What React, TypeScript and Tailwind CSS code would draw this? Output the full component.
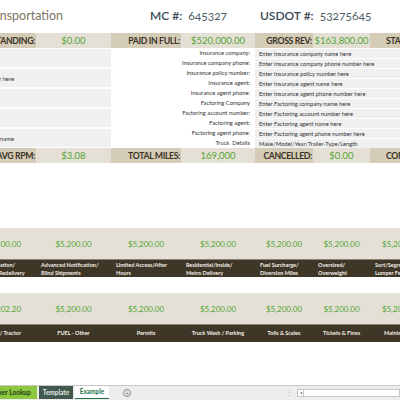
import React from 'react';

// column widths (first column starts 30px left of the visible window)
const COLS = 'grid grid-cols-[66px_75px_70px_74px_58px_57px_60px]';

const topSummary = [
  { label: 'OUTSTANDING:', value: '$0.00' },
  { label: 'PAID IN FULL:', value: '$520,000.00' },
  { label: 'GROSS REV:', value: '$163,800.00' },
];

const bottomSummary = [
  { label: 'AVG RPM:', value: '$3.08' },
  { label: 'TOTAL MILES:', value: '169,000' },
  { label: 'CANCELLED:', value: '$0.00' },
];

const infoRows = [
  ['Insurance company:', 'Enter Insurance company name here'],
  ['Insurance company phone:', 'Enter Insurance company phone number here'],
  ['Insurance policy number:', 'Enter Insurance policy number here'],
  ['Insurance agent:', 'Enter Insurance agent name here'],
  ['Insurance agent phone:', 'Enter Insurance agent phone number here'],
  ['Factoring Company', 'Enter Factoring company name here'],
  ['Factoring account number:', 'Enter Factoring account number here'],
  ['Factoring agent:', 'Enter Factoring agent name here'],
  ['Factoring agent phone:', 'Enter Factoring agent phone number here'],
  ['Truck  Details', 'Make/Model/Year/Trailer-Type/Length'],
];

const leftCells = ['', 'Enter MC number here', '', '', 'Enter dispatcher name'];

const accessorials = [
  ['Reconsignation/', 'Stop-Off/Redelivery'],
  ['Advanced Notification/', 'Blind Shipments'],
  ['Limited Access/After', 'Hours'],
  ['Residential/Inside/', 'Metro Delivery'],
  ['Fuel Surcharge/', 'Diversion Miles'],
  ['Oversized/', 'Overweight'],
  ['Sort/Segregate/', 'Lumper Fees'],
];

const expenses = [
  'Truck / Tractor',
  'FUEL - Other',
  'Permits',
  'Truck Wash / Parking',
  'Tolls & Scales',
  'Tickets & Fines',
  'Maintenance',
];

const SummaryRow = ({ items, last }: { items: { label: string; value: string }[]; last: string }) => (
  <div className={`${COLS} h-[15px] leading-[15px]`}>
    {items.map((it) => (
      <React.Fragment key={it.label}>
        <div className="whitespace-nowrap bg-[#d5ccb7] pr-[1px] text-right text-[8.7px] font-bold tracking-[-0.35px] text-[#3a3326]">
          {it.label}
        </div>
        <div className="bg-[#e5e0d5] text-center text-[9.5px] text-[#52a535]">{it.value}</div>
      </React.Fragment>
    ))}
    <div className="whitespace-nowrap bg-[#d5ccb7] pl-[16px] text-[8.7px] font-bold tracking-[-0.35px] text-[#3a3326]">{last}</div>
  </div>
);

export default function App() {
  return (
    <div className="relative h-[400px] w-[400px] overflow-hidden bg-white font-['Lato','Open_Sans',sans-serif]">
      <div className="-ml-[30px] w-[460px]">
        {/* title line */}
        <div className="flex h-[33px] items-start pt-[7px] whitespace-nowrap">
          <div className="w-[180px] pl-[13px] text-[12.5px] text-[#7d7464]">Transportation</div>
          <div className="flex w-[110px] items-baseline">
            <span className="text-[12px] font-semibold text-[#3b4a55]">MC #:</span>
            <span className="ml-[6px] text-[12px] text-[#4c5c66] oldstyle-nums">645327</span>
          </div>
          <div className="flex items-baseline">
            <span className="text-[12px] font-semibold text-[#3b4a55]">USDOT #:</span>
            <span className="ml-[6px] text-[12px] text-[#4c5c66] oldstyle-nums">53275645</span>
          </div>
        </div>

        <SummaryRow items={topSummary} last="STATUS:" />

        {/* info block */}
        <div className="flex h-[100px]">
          <div className="flex w-[141px] flex-col gap-[2px] py-[1px]">
            {leftCells.map((t, i) => (
              <div key={i} className="flex h-[18px] items-center bg-[#f0f0f0]">
                <div className="flex w-[44px] justify-end whitespace-nowrap pt-[2px] text-[5.8px] text-[#333]">{t}</div>
              </div>
            ))}
          </div>
          <div className="flex w-[144px] flex-col">
            {infoRows.map(([l]) => (
              <div key={l} className="h-[10px] whitespace-pre pr-[5px] text-right text-[5.8px] leading-[10px] text-[#333]">
                {l}
              </div>
            ))}
          </div>
          <div className="flex w-[175px] flex-col pt-[1px]">
            {infoRows.map(([l, v]) => (
              <div
                key={l}
                className="h-[10px] whitespace-nowrap border-b border-white bg-[#f0f0f0] pl-[4px] text-[5.8px] leading-[9px] text-[#333]"
              >
                {v}
              </div>
            ))}
          </div>
        </div>

        <SummaryRow items={bottomSummary} last="COMPLETED:" />

        {/* accessorial charges */}
        <div className="mt-[65px]">
          <div className={`${COLS} h-[32px] items-center border-b border-[#8c836f] bg-[#e5e0d5] text-[8px] text-[#52a535]`}>
            {accessorials.map((_, i) => (
              <div key={i} className="text-center">$5,200.00</div>
            ))}
          </div>
          <div className={`${COLS} h-[17px] bg-[#3e3626] pt-[2px] text-[5.5px] font-bold leading-[7.5px] text-[#f3efe6]`}>
            {accessorials.map(([a, b]) => (
              <div key={a} className="whitespace-nowrap pl-[5px]">
                <div>{a}</div>
                <div>{b}</div>
              </div>
            ))}
          </div>
        </div>

        {/* expenses */}
        <div className="mt-[16px]">
          <div className={`${COLS} h-[32px] items-center border-b border-[#8c836f] bg-[#e5e0d5] text-[8px] text-[#52a535]`}>
            {expenses.map((e, i) => (
              <div key={e} className="text-center">{i === 0 ? '$5,202.20' : '$5,200.00'}</div>
            ))}
          </div>
          <div className={`${COLS} h-[17px] items-center bg-[#3e3626] text-[5.5px] font-bold text-[#f3efe6]`}>
            {expenses.map((e) => (
              <div key={e} className="whitespace-nowrap text-center">{e}</div>
            ))}
          </div>
        </div>
      </div>

      {/* sheet tabs */}
      <div className="absolute bottom-0 left-0 flex h-[15px] w-[400px] items-start border-t border-[#c8c8c8] bg-[#ededed] text-[6.5px] font-bold">
        <div className="-ml-[18px] flex h-[13px] w-[55px] items-center justify-center bg-[#8dc63f] text-[#1f3a12]">Broker Lookup</div>
        <div className="ml-[2px] flex h-[13px] w-[34px] items-center justify-center bg-[#41594f] text-[#e2e8e4]">Template</div>
        <div className="ml-[2px] flex h-[13px] w-[34px] items-center justify-center border-b border-[#217346] bg-white text-[#217346]">Example</div>
        <div className="ml-[14px] mt-[3px] flex h-[8px] w-[8px] items-center justify-center rounded-full border border-[#8a8a8a] text-[7px] leading-none font-normal text-[#777]">
          +
        </div>
        <div className="ml-[155px] mt-[2px] text-[7px] font-normal leading-[9px] text-[#aaa]">⋮</div>
        <div className="ml-[4px] mt-[3px] flex h-[8px] flex-1 border border-[#c6c6c6] bg-white">
          <div className="flex w-[6px] items-center justify-center border-r border-[#c6c6c6] text-[4px] font-normal text-[#555]">◂</div>
        </div>
      </div>
    </div>
  );
}
